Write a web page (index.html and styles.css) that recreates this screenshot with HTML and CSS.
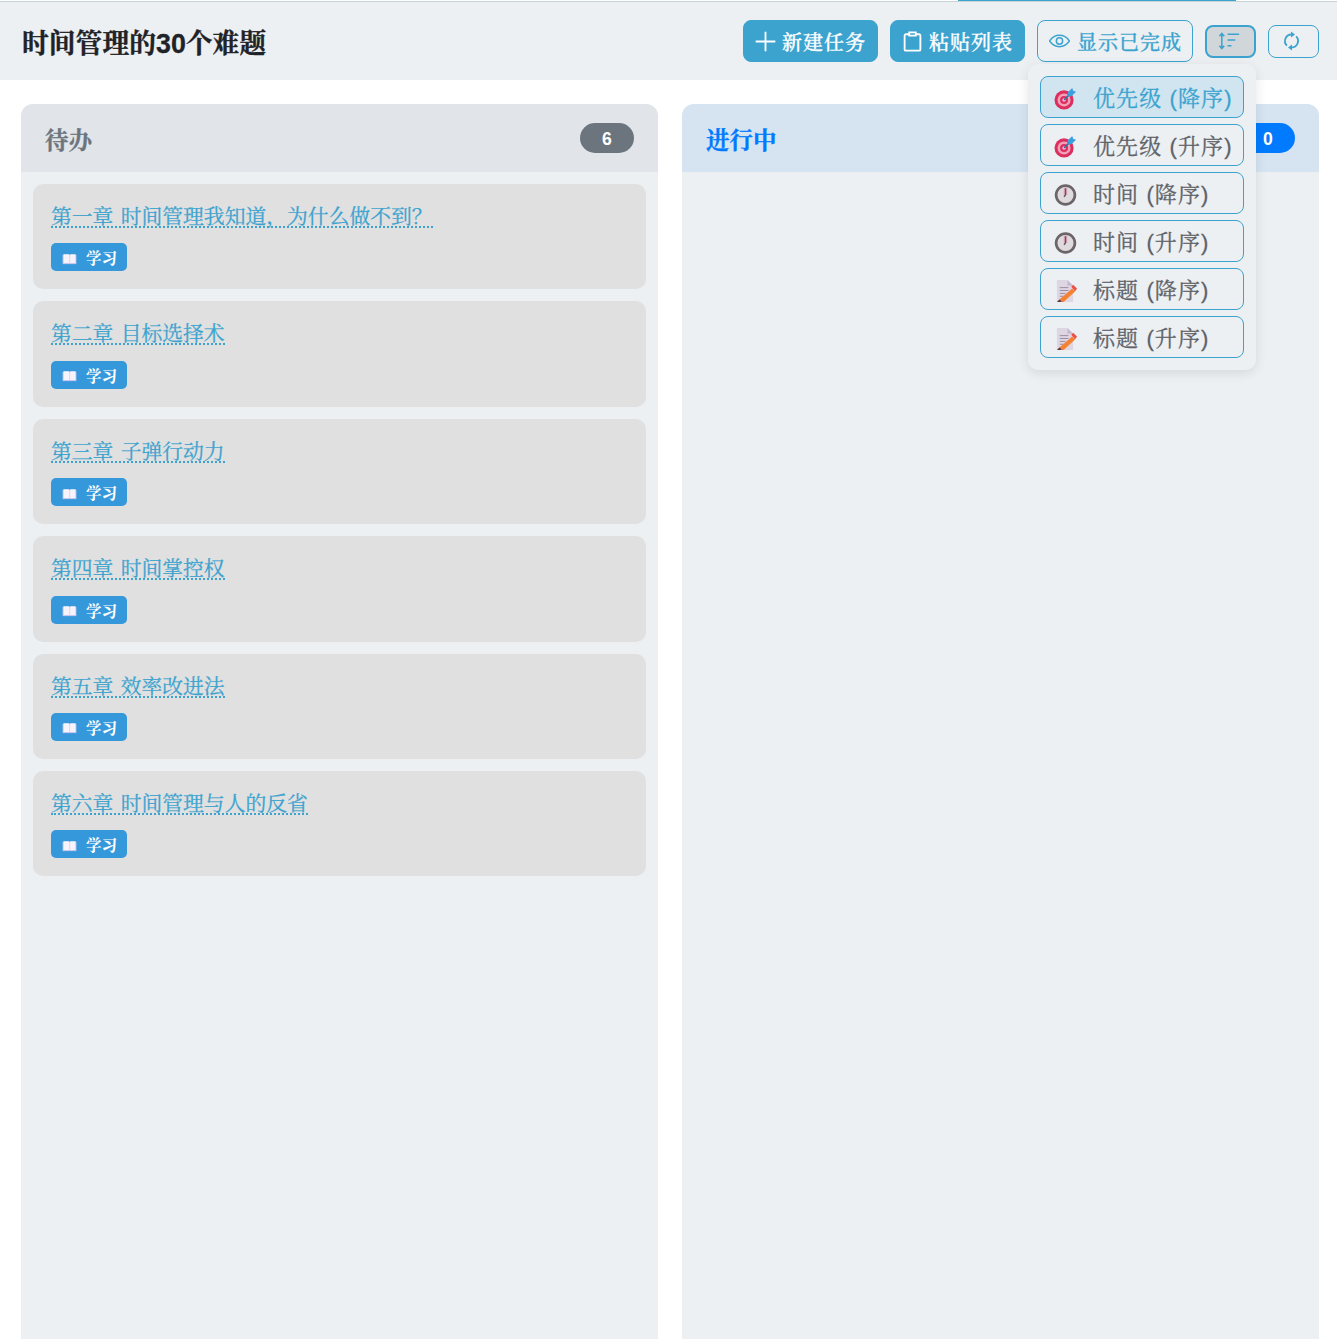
FILE: index.html
```html
<!DOCTYPE html>
<html lang="en">
<head>
  <meta charset="UTF-8" />
  <title>时间管理的30个难题</title>
  <link rel="stylesheet" href="styles.css">
</head>
<body>
  <svg class="sprites" width="0" height="0">
    <symbol id="target" viewBox="0 0 24 24">
      <circle cx="10.500" cy="13.500" r="10" fill="#dd2e60"/>
      <circle cx="10.500" cy="13.500" r="6.800" fill="#f2a0b8"/>
      <circle cx="10.500" cy="13.500" r="4.200" fill="#dd2e60"/>
      <circle cx="10.500" cy="13.500" r="1.800" fill="#f5c2d0"/>
      <path d="M10.500 13.500 19 5" stroke="#2b6f9e" stroke-width="1.600"/>
      <path d="M14 6l5-5 1 3 3 1-5 5-3-1z" fill="#3b9fe0"/>
    </symbol>
    <symbol id="watch" viewBox="0 0 24 24">
      <circle cx="12" cy="12.500" r="9.800" fill="#dedade" stroke="#6b6568" stroke-width="2.800"/>
      <path d="M12 4.500v8" stroke="#c8c3c8" stroke-width="4"/>
      <path d="M12 5.500v7" stroke="#d61f55" stroke-width="1.600"/>
      <path d="M12 12.500l-1.500 2" stroke="#555" stroke-width="1.400"/>
    </symbol>
    <symbol id="memo" viewBox="0 0 24 24">
      <path d="M3 1h11l6 6v17H3z" fill="#dfd6e4"/>
      <path d="M14 1l6 6h-6z" fill="#c5bacd"/>
      <path d="M6 9h9M6 12h9M6 15h6M6 18h4" stroke="#968b9e" stroke-width="1"/>
      <path d="M6 21l13-11 3 3-12 11H6z" fill="#f58233"/>
      <path d="M18 8l2-2 4 4-2 3z" fill="#f0504a"/>
      <path d="M3 24l3-3 2 3z" fill="#5b3a4b"/>
    </symbol>
    <symbol id="book" viewBox="0 0 24 24">
      <path d="M1 6h22v15H1z" fill="#c9c6ee"/>
      <path d="M2.500 5h8.500l1 1v13H2.500zM13 6l1-1h7.500v14H13z" fill="#f6f3fb"/>
    </symbol>
  </svg>

  <div class="top-line"></div>
  <header class="topbar">
    <h1 class="board-title">时间管理的30个难题</h1>
    <div class="actions">
      <button class="btn btn-solid">
        <svg class="ico" viewBox="0 0 16 16"><path d="M8 .5v15M.5 8h15"/></svg>新建任务
      </button>
      <button class="btn btn-solid">
        <svg class="ico" viewBox="0 0 16 16"><path d="M5.500 2.500H3a1 1 0 0 0-1 1v10.500a1 1 0 0 0 1 1h10a1 1 0 0 0 1-1V3.500a1 1 0 0 0-1-1h-2.500M5.500 1h5v2.500h-5z"/></svg>粘贴列表
      </button>
      <button class="btn btn-outline">
        <svg class="ico ico-eye" viewBox="0 0 20 16"><path d="M.5 8c2.500-3.600 5.700-5.400 9.500-5.400s7 1.800 9.500 5.400c-2.500 3.600-5.700 5.400-9.500 5.400S3 11.600.5 8z"/><circle cx="10" cy="8" r="3"/></svg>显示已完成
      </button>
      <div class="sort-wrap">
        <button class="btn-small is-open">
          <svg class="ico" viewBox="0 0 24 20"><path d="M4 2v16M1.500 5 4 2l2.500 3M1.500 15 4 18l2.500-3M10 3h12M10 9h8M10 15h4"/></svg>
        </button>
        <div class="sort-menu">
          <a class="sort-item active"><svg class="emoji"><use href="#target"/></svg>优先级 (降序)</a>
          <a class="sort-item"><svg class="emoji"><use href="#target"/></svg>优先级 (升序)</a>
          <a class="sort-item"><svg class="emoji"><use href="#watch"/></svg>时间 (降序)</a>
          <a class="sort-item"><svg class="emoji"><use href="#watch"/></svg>时间 (升序)</a>
          <a class="sort-item"><svg class="emoji"><use href="#memo"/></svg>标题 (降序)</a>
          <a class="sort-item"><svg class="emoji"><use href="#memo"/></svg>标题 (升序)</a>
        </div>
      </div>
      <button class="btn-small">
        <svg class="ico ico-repeat" viewBox="0 0 16 20"><path d="M8 3.500a6.500 6.500 0 0 0-4.600 11.100M8 16.500a6.500 6.500 0 0 0 4.600-11.100"/><path class="head" d="M7.500.5l4 3-4 3zM8.500 13.500l-4 3 4 3z"/></svg>
      </button>
    </div>
  </header>

  <main class="board">
    <section class="column">
      <div class="col-head">
        <h2 class="col-name">待办</h2>
        <span class="count count-gray">6</span>
      </div>
      <div class="cards">
        <article class="card"><a class="card-title">第一章 时间管理我知道，为什么做不到？</a><span class="tag"><svg class="tag-icon"><use href="#book"/></svg>学习</span></article>
        <article class="card"><a class="card-title">第二章 目标选择术</a><span class="tag"><svg class="tag-icon"><use href="#book"/></svg>学习</span></article>
        <article class="card"><a class="card-title">第三章 子弹行动力</a><span class="tag"><svg class="tag-icon"><use href="#book"/></svg>学习</span></article>
        <article class="card"><a class="card-title">第四章 时间掌控权</a><span class="tag"><svg class="tag-icon"><use href="#book"/></svg>学习</span></article>
        <article class="card"><a class="card-title">第五章 效率改进法</a><span class="tag"><svg class="tag-icon"><use href="#book"/></svg>学习</span></article>
        <article class="card"><a class="card-title">第六章 时间管理与人的反省</a><span class="tag"><svg class="tag-icon"><use href="#book"/></svg>学习</span></article>
      </div>
    </section>
    <section class="column">
      <div class="col-head col-head-blue">
        <h2 class="col-name col-name-blue">进行中</h2>
        <span class="count count-blue">0</span>
      </div>
    </section>
  </main>
</body>
</html>
```

FILE: styles.css
```css
* {
  box-sizing: border-box;
}

html, body {
  height: 100%;
}

body {
  margin: 0;
  background: #fff;
  font-family: "Liberation Sans", "Noto Serif CJK SC", serif;
  color: #212529;
  overflow: hidden;
}

.sprites {
  position: absolute;
}

.top-line {
  height: 2px;
  border-bottom: 1px solid #c6d3d8;
  position: relative;
}

.top-line::before {
  content: "";
  position: absolute;
  left: 958px;
  top: 0;
  width: 278px;
  height: 1px;
  background: #3ca3cf;
}

.topbar {
  height: 78px;
  background: #ecf0f3;
  display: flex;
  align-items: center;
  justify-content: space-between;
  padding: 0 18px 0 22px;
}

.board-title {
  margin: 0;
  font-size: 26.800px;
  font-weight: 700;
  color: #1f2327;
  -webkit-text-stroke: 0.3px currentColor;
}

.actions {
  display: flex;
  align-items: center;
  gap: 12px;
}

.btn {
  height: 42px;
  padding: 0 11px;
  border-radius: 8px;
  font-family: inherit;
  font-size: 20px;
  font-weight: 500;
  letter-spacing: 1px;
  display: flex;
  align-items: center;
  gap: 6px;
  -webkit-text-stroke: 0.3px currentColor;
}

.btn-solid {
  background: #3ca3cf;
  border: 1px solid #3ca3cf;
  color: #fff;
}

.btn-outline {
  background: transparent;
  border: 1px solid #3ca3cf;
  color: #3ca3cf;
  padding-right: 10px;
}

.btn-small {
  width: 51px;
  height: 33px;
  background: transparent;
  border: 1px solid #3ca3cf;
  border-radius: 8px;
  color: #3ca3cf;
  display: flex;
  align-items: center;
  padding: 0 0 0 11px;
}

.btn-small.is-open {
  background: #d0d6d9;
  border-width: 2px;
}

.ico {
  width: 21px;
  height: 21px;
  fill: none;
  stroke: currentColor;
  stroke-width: 1.400;
  flex: none;
}

.btn-small .ico {
  width: 23px;
  height: 20px;
  stroke-width: 1.600;
}

.btn-small .ico-repeat {
  stroke-width: 1.800;
}

.ico-repeat .head {
  fill: currentColor;
  stroke: none;
}

.ico-eye {
  height: 18px;
  margin-right: 1px;
}

.sort-wrap {
  position: relative;
}

.sort-menu {
  position: absolute;
  top: 39px;
  right: 0;
  width: 228px;
  padding: 12px;
  background: #ecf0f3;
  border-radius: 10px;
  box-shadow: 0 3px 12px rgba(0, 0, 0, 0.1);
  display: flex;
  flex-direction: column;
  gap: 6px;
  z-index: 10;
}

.sort-item {
  height: 42px;
  border: 1px solid #3ca3cf;
  border-radius: 8px;
  padding-left: 14px;
  display: flex;
  align-items: center;
  font-size: 22px;
  letter-spacing: 1.100px;
  color: #5f6368;
  white-space: nowrap;
  -webkit-text-stroke: 0.3px currentColor;
}

.sort-item.active {
  background: #d0e5ef;
  color: #3ca3cf;
}

.emoji {
  width: 23px;
  height: 23px;
  margin: 3px 16px 0 -1px;
  flex: none;
}

.board {
  display: flex;
  gap: 24px;
  padding: 24px 18px 0 21px;
  height: calc(100% - 80px);
}

.column {
  flex: 1;
  background: #ecf0f3;
  border-radius: 12px 12px 0 0;
  overflow: hidden;
}

.col-head {
  height: 68px;
  background: #e1e4e8;
  display: flex;
  align-items: center;
  justify-content: space-between;
  padding: 0 24px;
}

.col-head-blue {
  background: #d6e4f2;
}

.col-name {
  margin: 2px 0 0;
  font-size: 23.500px;
  font-weight: 700;
  color: #6c757d;
  -webkit-text-stroke: 0.3px currentColor;
}

.col-name-blue {
  color: #007bff;
}

.count {
  min-width: 54px;
  height: 30px;
  padding-top: 2px;
  border-radius: 15px;
  color: #fff;
  font-size: 17.600px;
  font-weight: 700;
  display: flex;
  align-items: center;
  justify-content: center;
}

.count-gray {
  background: #6c757d;
}

.count-blue {
  background: #007bff;
}

.cards {
  padding: 12px;
  display: flex;
  flex-direction: column;
  gap: 12px;
}

.card {
  height: 105.400px;
  background: #e0e0e0;
  border-radius: 10px;
  padding: 18px;
  display: flex;
  flex-direction: column;
  align-items: flex-start;
  gap: 15.400px;
}

.card-title {
  font-size: 20.800px;
  line-height: 30px;
  height: 26px;
  word-spacing: 1.500px;
  color: #3ca3cf;
  border-bottom: 2px dotted #3ca3cf;
  -webkit-text-stroke: 0.25px currentColor;
}

.tag {
  height: 28px;
  width: 76px;
  background: #3498db;
  border-radius: 5px;
  color: #fff;
  font-size: 15.500px;
  font-weight: 700;
  display: flex;
  align-items: center;
  padding-left: 11px;
}

.tag-icon {
  width: 15px;
  height: 15px;
  margin: 2px 9px 0 0;
}
```
